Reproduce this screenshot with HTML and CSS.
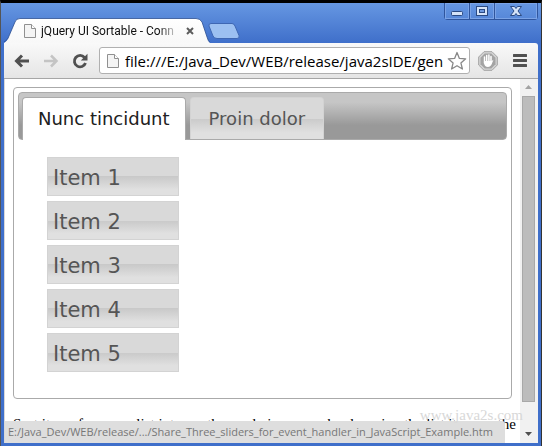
FILE: index.html
```html
<!DOCTYPE html>
<html lang="en">
<head>
    <meta charset="UTF-8">
    <meta name="viewport" content="width=device-width, initial-scale=1.0">
    <title>jQuery UI Sortable - Connect lists with Tabs</title>
    <link rel="stylesheet" href="styles.css">
</head>
<body>
    <div class="window">
        <header class="title-bar">
            <div class="browser-tab">
                <svg class="tab-shape" width="206" height="25" viewBox="0 0 206 25">
                    <defs>
                        <linearGradient id="tab-fill" x1="0" y1="0" x2="0" y2="1">
                            <stop offset="0" stop-color="#ffffff"/>
                            <stop offset="1" stop-color="#f8f8f8"/>
                        </linearGradient>
                    </defs>
                    <path d="M0 25 C3 23 4 21 5 18 L11 4 Q12 .5 16 .5 H192 Q196 .5 198 4 L203 19 Q204 23 206 25Z" fill="url(#tab-fill)"/>
                    <path d="M0 24 C3 22 4 21 5 18 L11 4 Q12 .5 16 .5 H192 Q196 .5 198 4 L203 19 Q204 23 206 24.5" fill="none" stroke="#27498c" stroke-opacity=".75"/>
                </svg>
                <svg class="file-icon" width="12" height="14" viewBox="0 0 12 14">
                    <path d="M.5 .5H7.500L11.500 4.500V13.500H.5Z" fill="#f4f4f4" stroke="#909090"/>
                    <path d="M7.500 .5V4.500H11.500" fill="#fff" stroke="#909090"/>
                </svg>
                <span class="tab-title">jQuery UI Sortable - Conn</span>
                <button class="tab-close" aria-label="Close tab">
                    <svg width="8" height="8" viewBox="0 0 8 8"><path d="M1 1L7 7M7 1L1 7" stroke="#5c5c5c" stroke-width="2"/></svg>
                </button>
            </div>
            <button class="new-tab" aria-label="New tab">
                <svg width="33" height="16" viewBox="0 0 33 16">
                    <path d="M3 .5H24Q26 .5 27 3L31 12.500Q32 15.500 29 15.500H9Q6 15.500 5 13L1 3Q.5 .5 3 .5Z" fill="#9cc0f1" stroke="#3e67b3"/>
                </svg>
            </button>
            <div class="window-buttons">
                <button aria-label="Minimize">
                    <svg width="12" height="12" viewBox="0 0 12 12"><rect x=".5" y="6.500" width="11" height="4" rx="1" fill="#d5e3f8" stroke="#2b4a83"/></svg>
                </button>
                <button aria-label="Maximize">
                    <svg width="12" height="12" viewBox="0 0 12 12">
                        <rect x=".5" y="1.500" width="11" height="9" fill="#d5e3f8" stroke="#2b4a83"/>
                        <rect x="3.500" y="4.500" width="5" height="3" fill="#6f9ae0" stroke="#2b4a83"/>
                    </svg>
                </button>
                <button class="close" aria-label="Close">
                    <svg width="12" height="12" viewBox="0 0 12 12">
                        <path d="M.5 1.500H4.500L6 3.500L7.500 1.500H11.500L8 6L11.500 10.500H7.500L6 8.500L4.500 10.500H.5L4 6Z" fill="#d5e3f8" stroke="#2b4a83"/>
                    </svg>
                </button>
            </div>
        </header>

        <nav class="toolbar">
            <button aria-label="Back">
                <svg width="16" height="14" viewBox="0 0 16 14"><path d="M15 7H3M8 1.500L2.500 7L8 12.500" fill="none" stroke="#505050" stroke-width="3"/></svg>
            </button>
            <button aria-label="Forward">
                <svg width="16" height="14" viewBox="0 0 16 14"><path d="M1 7H13M8 1.500L13.500 7L8 12.500" fill="none" stroke="#c4c4c4" stroke-width="2.500"/></svg>
            </button>
            <button aria-label="Reload">
                <svg width="16" height="16" viewBox="0 0 16 16">
                    <path d="M12.500 4.500A5.700 5.700 0 1 0 13.500 10" fill="none" stroke="#505050" stroke-width="2.800"/>
                    <path d="M15.500 .8V7.500H8.800Z" fill="#505050"/>
                </svg>
            </button>
            <div class="address-bar">
                <svg class="file-icon" width="12" height="14" viewBox="0 0 12 14">
                    <path d="M.5 .5H7.500L11.500 4.500V13.500H.5Z" fill="#f4f4f4" stroke="#909090"/>
                    <path d="M7.500 .5V4.500H11.500" fill="#fff" stroke="#909090"/>
                </svg>
                <input class="address" type="text" aria-label="Address" value="file:///E:/Java_Dev/WEB/release/java2sIDE/gen">
                <button aria-label="Bookmark this page">
                    <svg width="20" height="20" viewBox="0 0 20 20"><path d="M10 1.500L12.400 7.400L18.700 7.800L13.900 11.900L15.400 18L10 14.700L4.600 18L6.100 11.900L1.300 7.800L7.600 7.400Z" fill="#fff" stroke="#888" stroke-width="1.300" stroke-linejoin="round"/></svg>
                </button>
            </div>
            <button class="blocker" aria-label="Ad blocker">
                <svg width="20" height="20" viewBox="0 0 20 20">
                    <path d="M6 .7H14L19.300 6V14L14 19.300H6L.7 14V6Z" fill="#d5d5d5" stroke="#a2a2a2"/>
                    <path d="M6.700 2.500H13.300L17.500 6.700V13.300L13.300 17.500H6.700L2.500 13.300V6.700Z" fill="#a4a4a4"/>
                    <path d="M6.500 6V12M8.700 4.500V11M10.900 4V11M13 5.500V12" stroke="#fff" stroke-width="1.500" stroke-linecap="round"/>
                    <path d="M6 10H13.700L15.500 8.800L13.300 14Q12 16 10 16Q6.500 16 6 12Z" fill="#fff"/>
                </svg>
            </button>
            <button class="menu" aria-label="Menu">
                <svg width="14" height="13" viewBox="0 0 14 13"><path d="M1 1.500H13M1 6.500H13M1 11.500H13" stroke="#505050" stroke-width="3" stroke-linecap="round"/></svg>
            </button>
        </nav>

        <div class="viewport">
            <main class="page">
                <div class="tabs">
                    <ul class="tabs-nav">
                        <li class="active"><a href="#tabs-1">Nunc tincidunt</a></li>
                        <li><a href="#tabs-2">Proin dolor</a></li>
                    </ul>
                    <div class="tabs-panel" id="tabs-1">
                        <ul class="sortable">
                            <li>Item 1</li>
                            <li>Item 2</li>
                            <li>Item 3</li>
                            <li>Item 4</li>
                            <li>Item 5</li>
                        </ul>
                    </div>
                </div>
                <p class="description">Sort items from one list into another and vice versa, by dropping the list item on the appropriate tab above.</p>
            </main>
            <div class="scrollbar">
                <svg width="17" height="17" viewBox="0 0 17 17"><path d="M5 10L8.500 6L12 10Z" fill="#a3a3a3"/></svg>
                <div class="thumb"></div>
                <svg width="17" height="17" viewBox="0 0 17 17"><path d="M5 6L8.500 10L12 6Z" fill="#505050"/></svg>
            </div>
            <div class="status">E:/Java_Dev/WEB/release/.../Share_Three_sliders_for_event_handler_in_JavaScript_Example.htm</div>
            <div class="watermark">www.java2s.com</div>
        </div>
    </div>
</body>
</html>
```
FILE: styles.css
```css
* {
    box-sizing: border-box;
}

body {
    margin: 0;
    background-color: #000;
}

button {
    display: flex;
    align-items: center;
    justify-content: center;
    flex: none;
    padding: 0;
    border: none;
    background: none;
}

svg {
    display: block;
    flex: none;
}

ul {
    margin: 0;
    padding: 0;
    list-style: none;
}

/* Window frame */
.window {
    display: flex;
    flex-direction: column;
    height: 100vh;
    padding: 0 3px 3px;
    border-top: 3px solid #000;
    border-left: 1px solid #555;
    border-right: 1px solid #333;
    background: linear-gradient(#6697e2, #3f6fca 40px);
    font-family: "Open Sans", sans-serif;
}

.title-bar {
    display: flex;
    align-items: flex-end;
    height: 40px;
    flex: none;
}

.browser-tab {
    position: relative;
    display: flex;
    align-items: center;
    width: 206px;
    height: 25px;
    padding-left: 20px;
}

.tab-shape {
    position: absolute;
    top: 0;
    left: 0;
}

.browser-tab .file-icon,
.tab-title,
.tab-close {
    position: relative;
}

.tab-title {
    width: 138px;
    margin-left: 5px;
    overflow: hidden;
    white-space: nowrap;
    font-family: Roboto, sans-serif;
    font-size: 12px;
    line-height: 16px;
    color: #111;
    mask-image: linear-gradient(to right, #000 118px, transparent);
}

.tab-close {
    margin-left: 7px;
}

.new-tab {
    margin: 0 0 4px -2px;
}

.window-buttons {
    display: flex;
    align-self: flex-start;
    height: 17px;
    margin-left: auto;
    border: 1px solid #2f559d;
    border-top: none;
    border-radius: 0 0 4px 4px;
}

.window-buttons button {
    width: 25px;
    border-right: 1px solid #2f559d;
    box-shadow: inset 0 0 0 1px #7ba3e6;
}

.window-buttons .close {
    width: 42px;
    border-right: none;
}

/* Toolbar */
.toolbar {
    display: flex;
    align-items: center;
    height: 36px;
    flex: none;
    gap: 13px;
    padding: 0 11px 0 10px;
    border-bottom: 1px solid #a6a6a6;
    border-radius: 0 3px 0 0;
    background: linear-gradient(#f9f9f9, #e5e5e5);
}

.address-bar {
    display: flex;
    align-items: center;
    flex: 1;
    min-width: 0;
    height: 27px;
    margin: 0 -5px 0 -2px;
    padding: 0 2px 0 7px;
    border: 1px solid #b0b0b0;
    border-radius: 3px;
    background-color: #fff;
}

.address {
    flex: 1;
    min-width: 0;
    margin-left: 6px;
    padding: 0;
    border: none;
    outline: none;
    background: none;
    font-family: "Open Sans", sans-serif;
    font-size: 15px;
    color: #000;
}

.menu {
    margin-left: 2px;
}

/* Page area */
.viewport {
    position: relative;
    display: flex;
    flex: 1;
    min-height: 0;
    overflow: hidden;
    border-left: 1px solid #d8d8d8;
    background-color: #fff;
}

.page {
    flex: 1;
    min-width: 0;
    padding: 8px;
    overflow: hidden;
}

/* Tabs widget */
.tabs {
    padding: 4px;
    border: 1px solid #aaa;
    border-radius: 4px;
    background-color: #fff;
    font-family: Verdana, "DejaVu Sans", sans-serif;
}

.tabs-nav {
    display: flex;
    gap: 4px;
    height: 48px;
    padding: 4px 4px 0 3px;
    border: 1px solid #aaa;
    border-radius: 4px;
    background: linear-gradient(#c6c6c6 20%, #999 70%);
}

.tabs-nav li {
    height: 42px;
    border: 1px solid #d3d3d3;
    border-bottom: none;
    border-radius: 4px 4px 0 0;
    background: linear-gradient(#d9d9d9 50%, #cacaca 50%, #e0e0e0 85%);
}

.tabs-nav .active {
    height: 43px;
    border-color: #aaa;
    background: #fff;
}

.tabs-nav a {
    display: block;
    padding: 0 18px;
    font-size: 18px;
    line-height: 42px;
    color: #555;
    text-decoration: none;
}

.tabs-nav .active a {
    padding: 0 15px;
    color: #212121;
}

.tabs-panel {
    padding: 17px 29px 22px;
}

.sortable {
    display: flex;
    flex-direction: column;
    gap: 5px;
    width: 132px;
}

.sortable li {
    height: 39px;
    padding: 0 5px;
    border: 1px solid #d3d3d3;
    background: linear-gradient(#d9d9d9 50%, #c9c9c9 50%, #e0e0e0 85%);
    font-size: 21px;
    line-height: 40px;
    color: #555;
}

.description {
    margin: 16px -8px 16px 0;
    font-family: "Liberation Serif", serif;
    font-size: 15px;
    line-height: 18px;
}

/* Scrollbar */
.scrollbar {
    display: flex;
    flex-direction: column;
    width: 18px;
    background-color: #f1f1f1;
}

.thumb {
    height: 84%;
    margin: 0 3px 0 2px;
    border: 1px solid #a8a8a8;
    background-color: #bcbcbc;
}

.scrollbar svg:last-child {
    margin-top: auto;
}

/* Link target shown over the bottom of the page */
.status {
    position: absolute;
    left: 0;
    bottom: 0;
    height: 22px;
    padding: 0 12px 0 3px;
    border-radius: 0 3px 0 0;
    background-color: #dedede;
    white-space: nowrap;
    font-size: 11px;
    line-height: 22px;
    color: #777;
}

.watermark {
    position: absolute;
    right: 15px;
    bottom: 18px;
    font-family: "Liberation Serif", serif;
    font-size: 15px;
    line-height: 20px;
    color: #d8d8d8;
}
```
